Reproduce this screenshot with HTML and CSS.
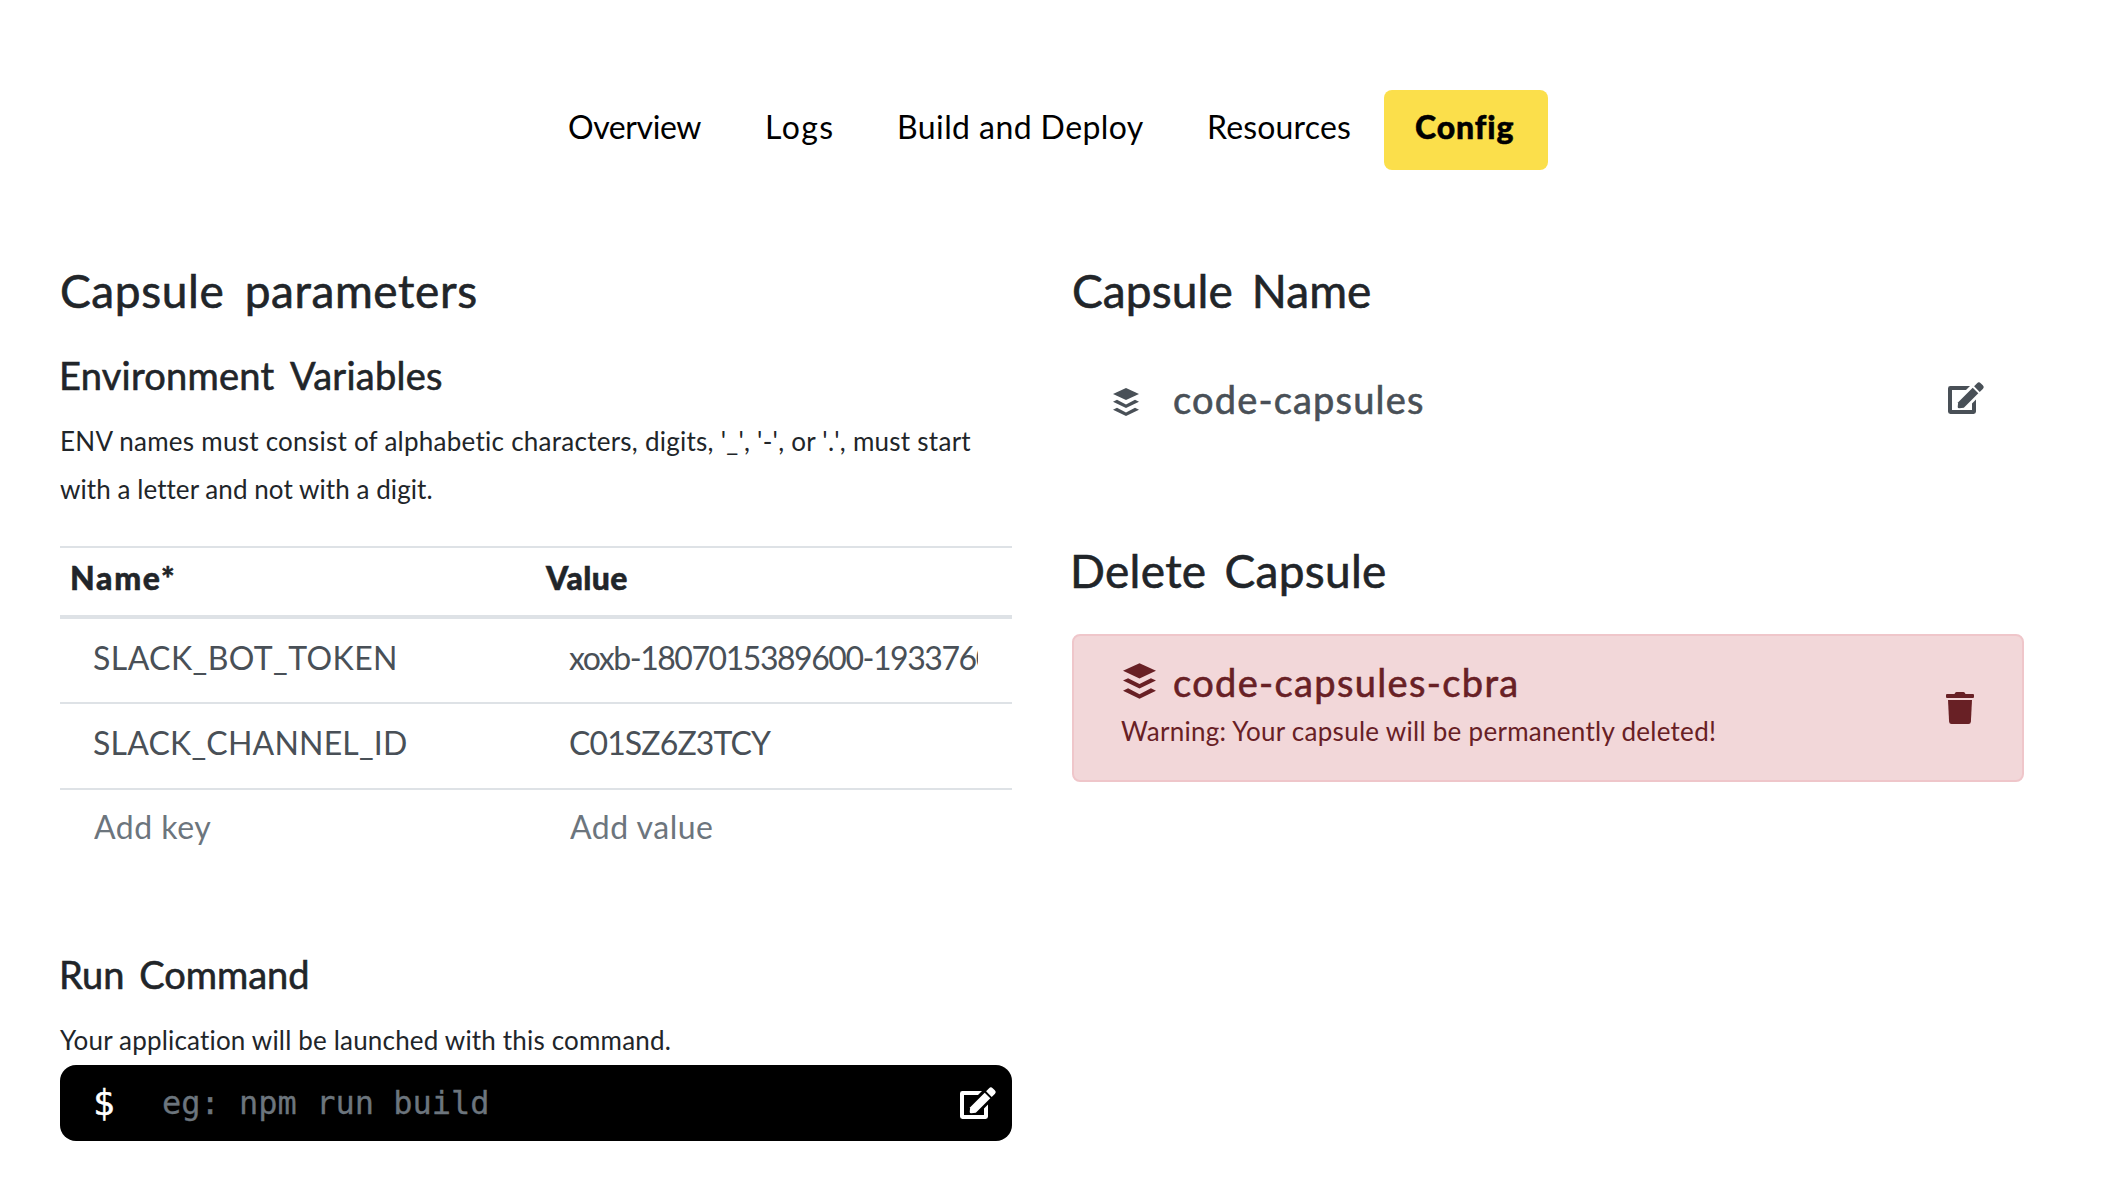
FILE: index.html
```html
<!DOCTYPE html>
<html lang="en">
<head>
<meta charset="utf-8">
<title>Capsule config</title>
<link rel="stylesheet" href="styles.css">
</head>
<body>
<svg class="sprite" aria-hidden="true">
  <symbol id="stack" viewBox="0 0 26 28">
    <path d="M13 0 26 6 13 12.1 0 6Z"/>
    <path d="M0 13.700 4 11.800 13 16.400 22 11.800 26 13.700 13 20Z"/>
    <path d="M0 21.700 4 19.800 13 24.400 22 19.800 26 21.700 13 28Z"/>
  </symbol>
  <symbol id="edit" viewBox="0 0 36 32">
    <path d="M22 4H2.400A2.400 2.400 0 0 0 0 6.400V29.600A2.400 2.400 0 0 0 2.400 32H25.600A2.400 2.400 0 0 0 28 29.600V17.600L24 21.600V28H4V8H18Z"/>
    <path d="M10.200 20.200 24.700 5.700 30.300 11.300 15.800 25.800 11.300 26.300Q9.600 26.400 9.700 24.700Z"/>
    <path d="M26.100 4.300 29.100 1.200Q30.900-.6 32.700 1.200L34.800 3.300Q36.600 5.100 34.800 6.900L31.700 9.900Z"/>
  </symbol>
  <symbol id="trash" viewBox="0 0 28 32">
    <path d="M1 2H8.500L9.200.8Q9.700 0 10.600 0H17.400Q18.300 0 18.800.8L19.500 2H27Q28 2 28 3V5Q28 6 27 6H1Q0 6 0 5V3Q0 2 1 2Z"/>
    <path d="M2 8H26L24.900 29.800Q24.700 32 22.500 32H5.500Q3.300 32 3.100 29.800Z"/>
  </symbol>
</svg>
<nav class="tabs">
  <a class="tab overview">Overview</a>
  <a class="tab logs">Logs</a>
  <a class="tab build">Build and Deploy</a>
  <a class="tab resources">Resources</a>
  <a class="tab config active">Config</a>
</nav>
<main class="columns">
  <section class="column">
    <h1 class="title params-title">Capsule parameters</h1>
    <h2 class="subtitle env-title">Environment Variables</h2>
    <p class="hint"><span class="hint-wide">ENV names must consist of alphabetic characters, digits, <span class="unkerned">'_', '-',</span> or <span class="unkerned">'.',</span> must start</span><br><span class="hint-line">with a letter and not with a digit.</span></p>
    <div class="env-table">
      <div class="row head"><span class="name-head">Name*</span><span class="value-head">Value</span></div>
      <div class="row"><span class="cell key">SLACK_BOT_TOKEN</span><span class="cell token">xoxb-1807015389600-1933760</span></div>
      <div class="row channel-row"><span class="cell">SLACK_CHANNEL_ID</span><span class="cell channel">C01SZ6Z3TCY</span></div>
      <div class="row add"><span class="cell">Add key</span><span class="cell">Add value</span></div>
    </div>
    <h2 class="subtitle run-title">Run Command</h2>
    <p class="hint run-hint">Your application will be launched with this command.</p>
    <div class="command">
      <span class="prompt">$</span>
      <span class="command-text">eg: npm run build</span>
      <svg class="edit-icon"><use href="#edit"/></svg>
    </div>
  </section>
  <section class="column">
    <h1 class="title name-title">Capsule Name</h1>
    <div class="capsule-name">
      <svg class="stack-small"><use href="#stack"/></svg>
      <span class="subtitle name-text">code-capsules</span>
      <svg class="edit-icon"><use href="#edit"/></svg>
    </div>
    <h1 class="title delete-title">Delete Capsule</h1>
    <div class="alert">
      <div class="alert-body">
        <div class="alert-heading">
          <svg class="stack-large"><use href="#stack"/></svg>
          <span class="subtitle alert-name">code-capsules-cbra</span>
        </div>
        <p class="hint warning">Warning: Your capsule will be permanently deleted!</p>
      </div>
      <svg class="trash-icon"><use href="#trash"/></svg>
    </div>
  </section>
</main>
</body>
</html>
```
FILE: styles.css
```css
* { box-sizing: border-box; }

body {
  margin: 0;
  padding: 90px 96px 0 60px;
  background: #fff;
  color: #212529;
  font-family: Lato, "Open Sans", sans-serif;
  font-size: 32px;
  line-height: 48px;
  font-variant-ligatures: none;
}

h1, h2, p { margin: 0; font-weight: 400; }
svg { display: block; flex: none; fill: currentColor; }
.sprite { position: absolute; width: 0; height: 0; }

/* Tabs */
.tabs { display: flex; justify-content: center; color: #000; }
.tab { height: 80px; padding: 13px 0 0 32px; white-space: nowrap; }
.overview { width: 197px; letter-spacing: -0.4px; }
.logs { width: 132px; letter-spacing: 1.4px; }
.build { width: 310px; letter-spacing: 0.42px; }
.resources { width: 209px; letter-spacing: 0.17px; }
.config { width: 164px; letter-spacing: 0.9px; }
.active {
  padding-left: 31px;
  border-radius: 8px;
  background: #fbdf4b;
  font-weight: 900;
  -webkit-text-stroke: 0.5px currentColor;
}

/* Columns and headings */
.columns {
  display: grid;
  grid-template-columns: 952px 952px;
  gap: 60px;
  margin-top: 93px;
}
.title {
  font-size: 46px;
  line-height: 56px;
  -webkit-text-stroke: 0.6px currentColor;
}
.subtitle {
  font-size: 38px;
  line-height: 46px;
  -webkit-text-stroke: 0.6px currentColor;
}
.params-title { letter-spacing: 0.6px; word-spacing: 8px; }
.name-title { letter-spacing: 0.1px; word-spacing: 7px; }
.env-title { margin: 33px 0 0 -1px; letter-spacing: 0.25px; word-spacing: 7px; }
.hint { margin-top: 19px; font-size: 26px; white-space: nowrap; }
.hint-wide { letter-spacing: 0.26px; }
.hint-line { letter-spacing: 0.07px; }
.unkerned { font-kerning: none; }

/* Environment variables */
.env-table { margin-top: 33px; border-top: 2px solid #dee2e6; }
.row {
  display: grid;
  grid-template-columns: 476px 476px;
  height: 85px;
  padding-top: 15px;
  border-bottom: 2px solid #dee2e6;
  color: #495057;
}
.row.head {
  height: 71px;
  padding: 6px 0 0 10px;
  border-bottom-width: 4px;
  color: #212529;
  font-weight: 900;
  -webkit-text-stroke: 0.5px currentColor;
}
.channel-row { height: 86px; }
.row.add { padding-top: 13px; border-bottom: 0; color: #6c757d; letter-spacing: 0.5px; }
.name-head { letter-spacing: 1.7px; }
.value-head { letter-spacing: 0.4px; }
.cell { margin: 0 34px 0 33px; overflow: hidden; white-space: nowrap; letter-spacing: 0.2px; }
.add .cell { margin-left: 34px; letter-spacing: inherit; }
.key { letter-spacing: 0.42px; }
.token { letter-spacing: -1.45px; }
.channel { letter-spacing: -0.88px; }

/* Run command */
.run-title { margin: 76px 0 0 -1px; word-spacing: 5px; }
.run-hint { letter-spacing: 0.18px; }
.command {
  display: flex;
  align-items: center;
  height: 76px;
  margin-top: 1px;
  padding: 0 16px 0 33px;
  border-radius: 16px;
  background: #000;
  color: #fff;
  font-family: "DejaVu Sans Mono", monospace;
}
.prompt { width: 69px; font-size: 36px; -webkit-text-stroke: 0.5px currentColor; }
.command-text { flex: 1; color: #6c757d; -webkit-text-stroke: 0.3px currentColor; }
.edit-icon { width: 36px; height: 32px; }

/* Capsule name */
.capsule-name {
  display: flex;
  align-items: center;
  height: 46px;
  margin-top: 57px;
  padding: 0 40px 0 41px;
  color: #495057;
}
.capsule-name .edit-icon { margin-bottom: 2px; }
.stack-small { width: 26px; height: 28px; margin-top: 6px; }
.name-text { flex: 1; margin-left: 34px; letter-spacing: 1.18px; }

/* Delete capsule */
.delete-title { margin: 121px 0 0 -2px; letter-spacing: 0.3px; word-spacing: 6px; }
.alert {
  display: flex;
  align-items: center;
  justify-content: space-between;
  height: 148px;
  margin-top: 35px;
  padding: 0 48px;
  border: 2px solid #efc6ca;
  border-radius: 8px;
  background: #f2d7d9;
  color: #682025;
}
.alert-body { padding-bottom: 3px; }
.alert-heading { display: flex; align-items: center; margin-left: 1px; }
.stack-large { width: 33px; height: 36px; margin-bottom: 2px; }
.alert-name { margin-left: 17px; letter-spacing: 1.35px; }
.warning { margin: 2px 0 0 -1px; letter-spacing: 0.28px; }
.trash-icon { width: 28px; height: 32px; }
```
